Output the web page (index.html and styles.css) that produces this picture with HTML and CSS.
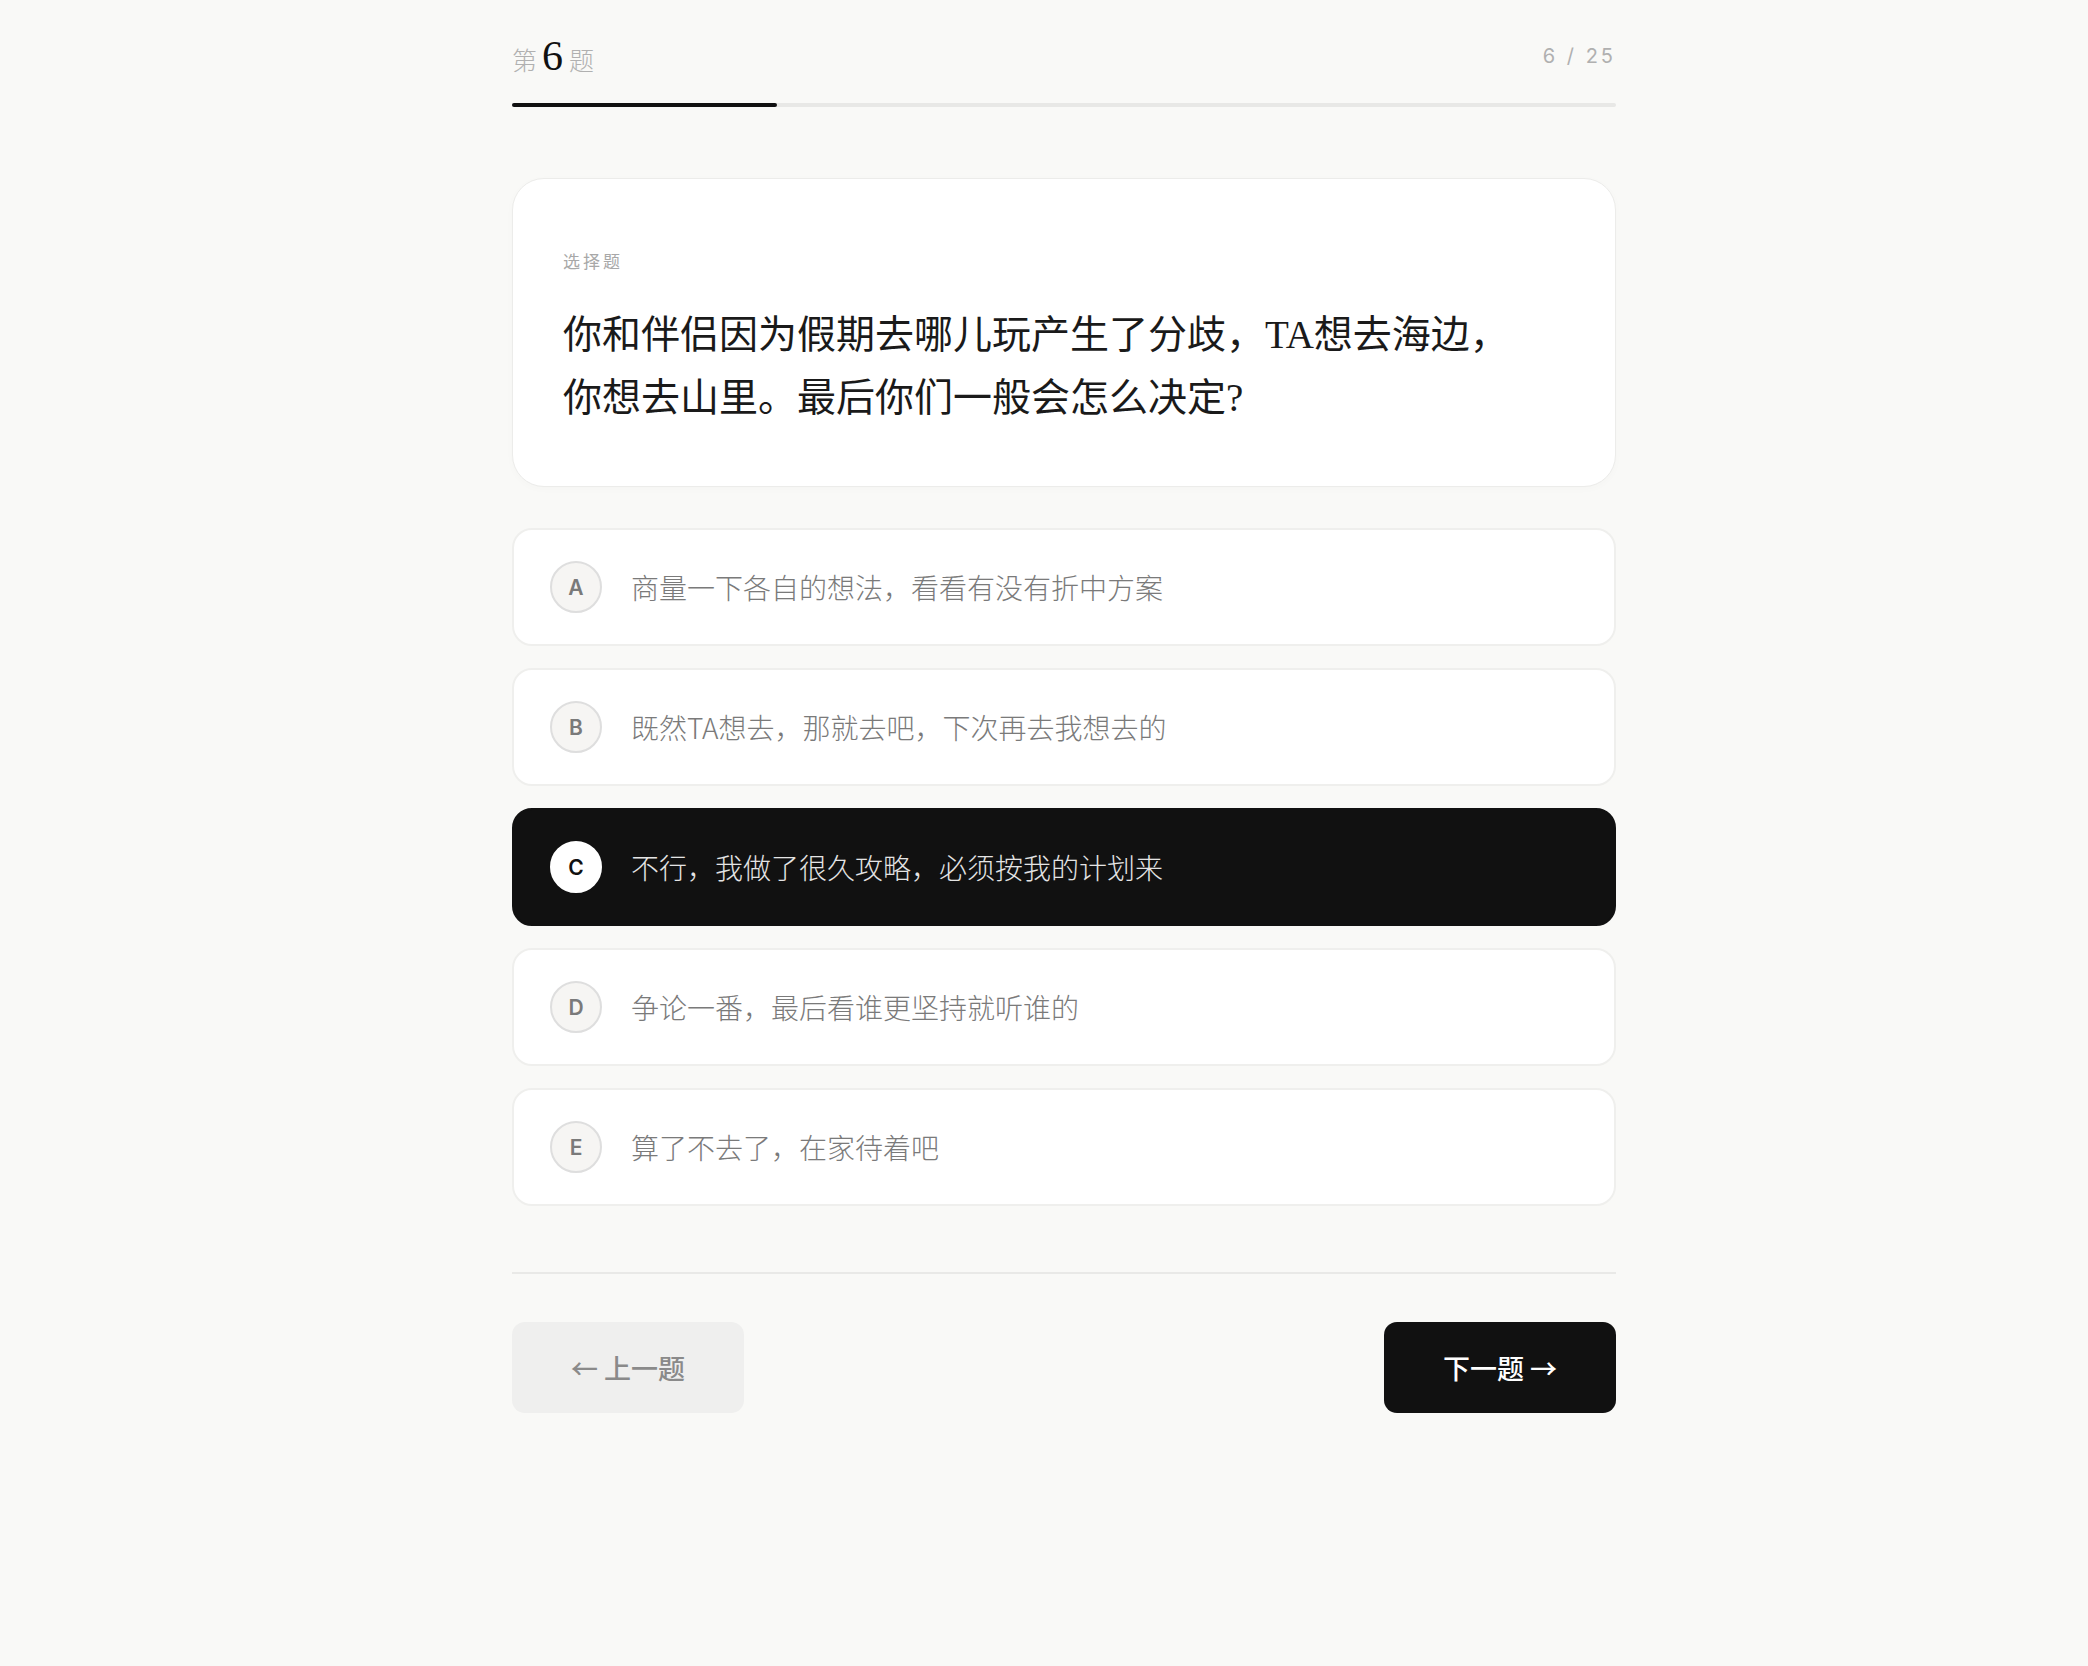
FILE: index.html
```html
<!DOCTYPE html>
<html lang="zh-CN">
<head>
  <meta charset="UTF-8" />
  <meta name="viewport" content="width=device-width, initial-scale=1.0" />
  <title>第 6 题</title>
  <link rel="stylesheet" href="styles.css">
</head>
<body>
  <div class="quiz">
    <div class="top">
      <div class="q-num">第<span class="num">6</span>题</div>
      <div class="count">6 / 25</div>
    </div>
    <div class="progress">
      <div class="progress-fill" style="width: 24%"></div>
    </div>

    <div class="question-card">
      <div class="type">选择题</div>
      <div class="question">你和伴侣因为假期去哪儿玩产生了分歧，TA想去海边，你想去山里。最后你们一般会怎么决定?</div>
    </div>

    <div class="options">
      <div class="option">
        <div class="letter">A</div>
        <div class="text">商量一下各自的想法，看看有没有折中方案</div>
      </div>
      <div class="option">
        <div class="letter">B</div>
        <div class="text">既然TA想去，那就去吧，下次再去我想去的</div>
      </div>
      <div class="option selected">
        <div class="letter">C</div>
        <div class="text">不行，我做了很久攻略，必须按我的计划来</div>
      </div>
      <div class="option">
        <div class="letter">D</div>
        <div class="text">争论一番，最后看谁更坚持就听谁的</div>
      </div>
      <div class="option">
        <div class="letter">E</div>
        <div class="text">算了不去了，在家待着吧</div>
      </div>
    </div>

    <div class="divider"></div>

    <div class="nav">
      <button class="btn prev">← 上一题</button>
      <button class="btn next">下一题 →</button>
    </div>
  </div>
</body>
</html>
```

FILE: styles.css
```css
body {
  margin: 0;
  padding: 0 0 0 40px;
  background: #f9f9f7;
  font-family: "Noto Sans CJK SC", sans-serif;
  color: #222;
}
.quiz {
  width: 1104px;
  margin: 0 auto;
  padding-top: 32px;
}
.top {
  display: flex;
  justify-content: space-between;
  align-items: baseline;
}
.q-num {
  font-family: "Liberation Serif", "Noto Sans CJK SC", serif;
  font-size: 25px;
  color: #b0b0b0;
  font-weight: 300;
}
.q-num .num {
  font-size: 42px;
  color: #111;
  margin: 0 6px 0 5px;
}
.count {
  align-self: flex-start;
  margin-top: 12px;
  line-height: 24px;
  font-family: Inter, "Liberation Sans", sans-serif;
  font-size: 20px;
  color: #b0b0b0;
  letter-spacing: 3px;
}
.progress {
  margin-top: 23px;
  height: 4px;
  background: #e8e8e6;
  border-radius: 2px;
}
.progress-fill {
  height: 100%;
  background: #111;
  border-radius: 2px;
}

.question-card {
  margin-top: 71px;
  background: #fff;
  border: 1px solid #ececea;
  border-radius: 32px;
  padding: 73px 50px 57px;
  box-shadow: 0 2px 8px rgba(0, 0, 0, 0.02);
}
.type {
  font-size: 17px;
  line-height: 1;
  color: #a8a8a8;
  letter-spacing: 3px;
}
.question {
  margin-top: 34px;
  font-family: "Liberation Serif", "Noto Sans CJK SC", serif;
  font-size: 39px;
  line-height: 63px;
  color: #1a1a1a;
  padding-right: 40px;
}

.options {
  margin-top: 41px;
  display: flex;
  flex-direction: column;
  gap: 22px;
}
.option {
  height: 118px;
  box-sizing: border-box;
  display: flex;
  align-items: center;
  gap: 29px;
  padding: 0 36px;
  background: #fff;
  border: 2px solid #efefed;
  border-radius: 20px;
}
.letter {
  width: 52px;
  height: 52px;
  box-sizing: border-box;
  border-radius: 50%;
  border: 2px solid #dedede;
  background: #f6f5f3;
  display: flex;
  align-items: center;
  justify-content: center;
  font-family: Inter, "Liberation Sans", sans-serif;
  font-weight: 600;
  font-size: 21px;
  color: #7a7a7a;
}
.text {
  font-size: 28px;
  font-weight: 300;
  color: #7a7a7a;
}
.option.selected {
  background: #111;
  border-color: #111;
}
.option.selected .letter {
  background: #fff;
  border-color: #fff;
  color: #111;
}
.option.selected .text {
  color: #e4e4e4;
}

.divider {
  margin-top: 66px;
  height: 2px;
  background: #e9e9e7;
}
.nav {
  margin-top: 48px;
  display: flex;
  justify-content: space-between;
}
.btn {
  width: 232px;
  height: 91px;
  border: none;
  border-radius: 13px;
  font-family: "Noto Sans CJK SC", sans-serif;
  font-size: 27px;
  font-weight: 500;
  cursor: pointer;
}
.prev {
  background: #efefee;
  color: #8a8a8a;
}
.next {
  background: #111;
  color: #fff;
}
```
